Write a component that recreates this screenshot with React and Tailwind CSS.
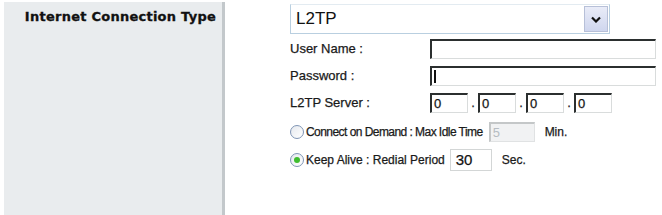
// Router setup fragment: Internet Connection Type = L2TP
function Field({ className = "", children }) {
  return (
    <div
      className={`h-[20px] bg-white border border-[#d9dcdc] border-t-[2px] border-l-[2px] border-t-[#2b2f2f] border-l-[#2b2f2f] flex items-center pl-[2px] text-[13px] leading-none text-[#111] ${className}`}
    >
      {children}
    </div>
  );
}

function Radio({ checked }) {
  return (
    <span className="w-[14px] h-[14px] rounded-full border-[1.5px] border-[#7f95b5] bg-gradient-to-br from-[#e6e9ee] to-white flex items-center justify-center shrink-0">
      {checked && <span className="w-[6px] h-[6px] rounded-full bg-[#3fbd2f]" />}
    </span>
  );
}

export default function App() {
  return (
    <div className="w-[662px] h-[215px] bg-white flex font-['Liberation_Sans',Arial,sans-serif] text-[13px] text-[#1a1a1a] overflow-hidden [-webkit-text-stroke:0.25px_#1a1a1a]">
      {/* Left label column */}
      <div className="ml-[4px] mt-[2px] w-[221px] bg-[#e9ecee] border-r-[3px] border-[#c3c8cb] flex justify-end pr-[6px] pt-[5px] [-webkit-text-stroke:0px]">
        <span className="font-['DejaVu_Sans',sans-serif] font-bold text-[13px] tracking-[0.25px] text-[#111] h-[16px] [-webkit-text-stroke:0.3px_#111]">Internet Connection Type</span>
      </div>

      {/* Right form */}
      <div className="flex-1 pl-[65px] pt-[4px]">
        {/* select */}
        <div className="w-[320px] h-[30px] border border-[#b9cfe0] border-t-[#e3ebf1] flex items-center justify-between pl-[5px] pr-[1px] [-webkit-text-stroke:0px]">
          <span className="text-[17px] text-[#111]">L2TP</span>
          <span className="w-[24px] h-[26px] bg-gradient-to-b from-[#e9ecf8] to-[#cfd6ee] border border-[#b7c0d8] flex items-center justify-center">
            <svg width="10" height="7" viewBox="0 0 10 7">
              <path d="M1 1.5 L5 5.5 L9 1.5" fill="none" stroke="#111" strokeWidth="2.2" />
            </svg>
          </span>
        </div>

        <div className="flex items-center mt-[4px] h-[22px]">
          <span className="w-[140px]">User Name :</span>
          <Field className="w-[226px]" />
        </div>
        <div className="flex items-center mt-[5px] h-[22px]">
          <span className="w-[140px]">Password :</span>
          <Field className="w-[226px]">
            <span className="w-[2px] h-[13px] bg-[#111]" />
          </Field>
        </div>
        <div className="flex items-center mt-[5px] h-[22px]">
          <span className="w-[140px]">L2TP Server :</span>
          <div className="flex items-center">
            <Field className="w-[38px]">0</Field>
            <span className="w-[10px] text-center">.</span>
            <Field className="w-[38px]">0</Field>
            <span className="w-[10px] text-center">.</span>
            <Field className="w-[38px]">0</Field>
            <span className="w-[10px] text-center">.</span>
            <Field className="w-[38px]">0</Field>
          </div>
        </div>

        <div className="flex items-center mt-[6px] h-[24px] text-[12px]">
          <Radio />
          <span className="ml-[2px] tracking-[-0.55px]">Connect on Demand : Max Idle Time</span>
          <div className="ml-[6px] w-[46px] h-[20px] bg-[#f1f2f3] border border-[#e0e2e3] border-t-[2px] border-l-[2px] border-t-[#c4c7c8] border-l-[#c4c7c8] flex items-center pl-[2px] text-[13px] text-[#b6bcc2] [-webkit-text-stroke:0px]">5</div>
          <span className="ml-[10px]">Min.</span>
        </div>
        <div className="flex items-center mt-[4px] h-[24px] text-[12px]">
          <Radio checked />
          <span className="ml-[2px]">Keep Alive : Redial Period</span>
          <div className="ml-[5px] w-[42px] h-[22px] bg-white border border-[#d3d6d6] flex items-center pl-[5px] text-[15px] text-[#111]">30</div>
          <span className="ml-[10px]">Sec.</span>
        </div>
      </div>
    </div>
  );
}
